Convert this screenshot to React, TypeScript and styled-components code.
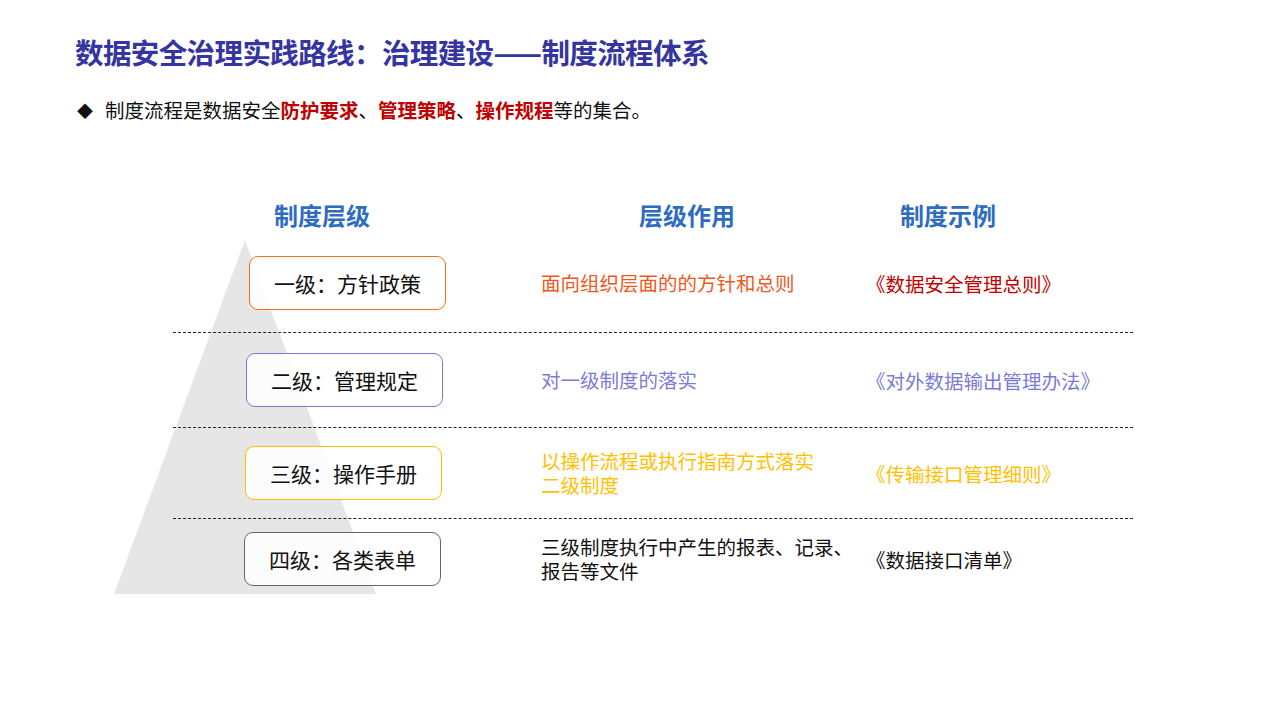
import React from "react";
import styled, { createGlobalStyle } from "styled-components";

const Global = createGlobalStyle`
  html, body { margin: 0; padding: 0; background: #fff; }
  body { font-family: "Noto Sans CJK SC", "Liberation Sans", sans-serif; }
`;

const Page = styled.div`
  width: 1280px; height: 720px; position: relative; overflow: hidden; background: #fff;
`;
const Title = styled.h1`
  margin: 0; position: absolute; left: 75px; top: 33px;
  font-size: 28.5px; font-weight: 700; color: #3535a2; line-height: 38px; letter-spacing: -0.6px;
`;
const Sub = styled.div`
  position: absolute; left: 77px; top: 95px; font-size: 19.5px; line-height: 30px; color: #111;
  display: flex; align-items: center;
`;
const Diamond = styled.span` font-size: 16px; margin-right: 12px; `;
const Red = styled.b` color: #c00000; font-weight: 700; `;

const Tri = styled.svg` position: absolute; left: 114px; top: 240px; `;

const Table = styled.div`
  position: absolute; left: 173px; top: 194px; width: 960px;
  display: flex; flex-direction: column;
`;
const Head = styled.div`
  display: grid; grid-template-columns: 368px 259px 333px; height: 40px; align-items: center;
  font-size: 24px; font-weight: 700; color: #2e6cc0;
`;
const HCell = styled.div<{ $pl: number }>` padding-left: ${p => p.$pl}px; `;
const Row = styled.div<{ $h: number; $line?: boolean }>`
  display: grid; grid-template-columns: 368px 332px 260px; height: ${p => p.$h}px; align-items: center;
  border-bottom: ${p => (p.$line ? "1px dashed #222" : "none")};
`;
const Box = styled.div<{ $c: string; $ml: number }>`
  margin-left: ${p => p.$ml}px; width: 197px; height: 54px; box-sizing: border-box;
  border: 1px solid ${p => p.$c}; border-radius: 9px; background: rgba(255,255,255,0.85);
  display: flex; align-items: center; justify-content: center; font-size: 21px; color: #111;
`;
const Role = styled.div<{ $c: string }>` color: ${p => p.$c}; font-size: 19.5px; line-height: 24px; `;
const Ex = styled.div<{ $c: string }>` color: ${p => p.$c}; font-size: 19.5px; margin-left: -7px; `;

const rows = [
  { box: "一级：方针政策", bc: "#f07020", ml: 76, role: ["面向组织层面的的方针和总则"], rc: "#f0581e", ex: "《数据安全管理总则》", ec: "#c00000", h: 98 },
  { box: "二级：管理规定", bc: "#7a7ad6", ml: 73, role: ["对一级制度的落实"], rc: "#7b7bd6", ex: "《对外数据输出管理办法》", ec: "#7b7bd6", h: 94 },
  { box: "三级：操作手册", bc: "#ffc000", ml: 72, role: ["以操作流程或执行指南方式落实", "二级制度"], rc: "#ffc000", ex: "《传输接口管理细则》", ec: "#ffc000", h: 90 },
  { box: "四级：各类表单", bc: "#666", ml: 71, role: ["三级制度执行中产生的报表、记录、", "报告等文件"], rc: "#111", ex: "《数据接口清单》", ec: "#111", h: 80 },
];

export default function App() {
  return (
    <Page>
      <Global />
      <Title>数据安全治理实践路线：治理建设——制度流程体系</Title>
      <Sub><Diamond>◆</Diamond>制度流程是数据安全<Red>防护要求</Red>、<Red>管理策略</Red>、<Red>操作规程</Red>等的集合。</Sub>
      <Tri width="262" height="354" viewBox="0 0 262 354"><polygon points="131,0 262,354 0,354" fill="#e6e6e6" /></Tri>
      <Table>
        <Head>
          <HCell $pl={101}>制度层级</HCell>
          <HCell $pl={98}>层级作用</HCell>
          <HCell $pl={100}>制度示例</HCell>
        </Head>
        {rows.map((r, i) => (
          <Row key={i} $h={r.h} $line={i < 3}>
            <Box $c={r.bc} $ml={r.ml}>{r.box}</Box>
            <Role $c={r.rc}>
              {r.role.map((l, j) => <div key={j}>{l}</div>)}
            </Role>
            <Ex $c={r.ec}>{r.ex}</Ex>
          </Row>
        ))}
      </Table>
    </Page>
  );
}
